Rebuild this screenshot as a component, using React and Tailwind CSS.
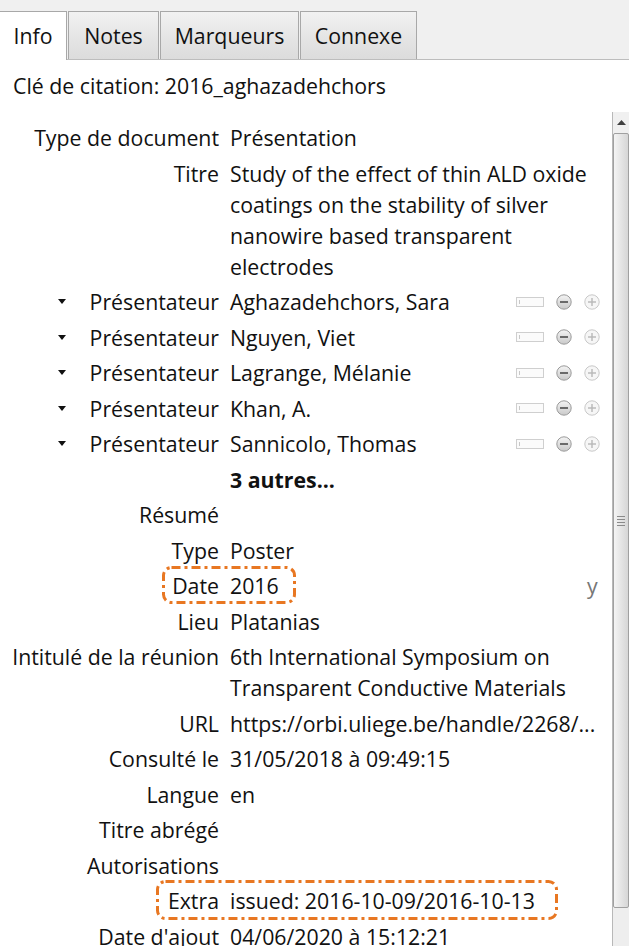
const font = { fontFamily: '"Open Sans", "Noto Sans", sans-serif' };

const tabs = ["Info", "Notes", "Marqueurs", "Connexe"];
const tabWidths = ["w-[67px]", "w-[91px]", "w-[139px]", "w-[117px]"];

const creators = [
  "Aghazadehchors, Sara",
  "Nguyen, Viet",
  "Lagrange, Mélanie",
  "Khan, A.",
  "Sannicolo, Thomas",
];

function DashBox({ className }) {
  return (
    <svg className={`pointer-events-none absolute ${className}`} preserveAspectRatio="none">
      <rect
        x="1.5"
        y="1.5"
        width="calc(100% - 3px)"
        height="calc(100% - 3px)"
        rx="8"
        fill="none"
        stroke="#e87722"
        strokeWidth="3"
        strokeDasharray="9 4 3 4"
      />
    </svg>
  );
}

function Row({ label, children, className = "", extra }) {
  return (
    <div className={`relative flex py-[2.25px] leading-[31px] ${className}`}>
      <div className="w-[219px] shrink-0 whitespace-nowrap text-right">{label}</div>
      <div className="ml-[11px] min-w-0 flex-1">{children}</div>
      {extra}
    </div>
  );
}

function CreatorControls() {
  return (
    <div className="flex items-center">
      <div className="relative h-[10px] w-[28px] border border-[#cfcfcf] bg-[#fbfbfb]">
        <div className="absolute left-[2px] top-[2px] h-[4px] w-px bg-[#c8c8c8]" />
      </div>
      <svg width="16" height="16" viewBox="0 0 16 16" className="ml-[12px]">
        <defs>
          <linearGradient id="mg" x1="0" y1="0" x2="0" y2="1">
            <stop offset="0" stopColor="#f4f4f4" />
            <stop offset="1" stopColor="#c9c9c9" />
          </linearGradient>
        </defs>
        <circle cx="8" cy="8" r="7.2" fill="url(#mg)" stroke="#9a9a9a" strokeWidth="1" />
        <rect x="4" y="7" width="8" height="2" fill="#6a6a6a" />
      </svg>
      <svg width="16" height="16" viewBox="0 0 16 16" className="ml-[12px]">
        <circle cx="8" cy="8" r="7.2" fill="#f6f6f6" stroke="#c8c8c8" strokeWidth="1" />
        <rect x="4" y="7.3" width="8" height="1.4" fill="#b8b8b8" />
        <rect x="7.3" y="4" width="1.4" height="8" fill="#b8b8b8" />
      </svg>
    </div>
  );
}

function Scrollbar() {
  return (
    <div className="flex w-[17px] shrink-0 flex-col border-l border-[#b8b8b8] bg-[#f0f0f0]">
      <div className="flex h-[21px] items-center justify-center">
        <svg width="9" height="5" viewBox="0 0 9 5">
          <path d="M0 5 L4.5 0 L9 5 Z" fill="#404040" />
        </svg>
      </div>
      <div className="flex h-[775px] items-center justify-center rounded-[2px] border border-[#a0a0a0] bg-gradient-to-r from-[#f4f4f4] to-[#d6d6d6]">
        <div className="flex flex-col gap-[2px]">
          <div className="h-px w-[8px] bg-[#8a8a8a]" />
          <div className="h-px w-[8px] bg-[#8a8a8a]" />
          <div className="h-px w-[8px] bg-[#8a8a8a]" />
          <div className="h-px w-[8px] bg-[#8a8a8a]" />
        </div>
      </div>
      <div className="flex-1 bg-[#eeeeee]" />
    </div>
  );
}

export default function App() {
  return (
    <div
      className="flex h-[946px] w-[629px] flex-col overflow-hidden bg-white text-[21.3px] text-[#111]"
      style={font}
    >
      <div className="flex h-[60px] shrink-0 items-end border-b border-[#bdbdbd] bg-[#f0f0f0]">
        {tabs.map((t, i) => (
          <div
            key={t}
            className={`flex h-[48px] items-center justify-center border-t border-r border-[#a8a8a8] ${tabWidths[i]} ${
              i === 0
                ? "-mb-px h-[49px] bg-white"
                : "ml-px border-l bg-gradient-to-b from-[#f2f2f2] via-[#e6e6e6] to-[#dcdcdc]"
            }`}
          >
            {t}
          </div>
        ))}
      </div>

      <div className="shrink-0 pl-[13px] pt-[10px] leading-[31px]">
        Clé de citation: 2016_aghazadehchors
      </div>

      <div className="mt-[11px] flex min-h-0 flex-1">
        <div className="min-w-0 flex-1 pt-[8px]">
          <Row label="Type de document">Présentation</Row>
          <Row label="Titre">
            <div className="whitespace-nowrap">Study of the effect of thin ALD oxide</div>
            <div>coatings on the stability of silver</div>
            <div>nanowire based transparent</div>
            <div>electrodes</div>
          </Row>
          {creators.map((c) => (
            <Row
              key={c}
              label={
                <div className="flex items-center justify-end">
                  <svg width="8" height="5" viewBox="0 0 8 5" className="mr-[24px]">
                    <path d="M0 0 L8 0 L4 5 Z" fill="#111" />
                  </svg>
                  <span>Présentateur</span>
                </div>
              }
            >
              <div className="flex items-center justify-between pr-[12px]">
                <span>{c}</span>
                <CreatorControls />
              </div>
            </Row>
          ))}
          <Row label="">
            <span className="font-bold">3 autres...</span>
          </Row>
          <Row label="Résumé" />
          <Row label="Type">Poster</Row>
          <Row
            label="Date"
            extra={
              <>
                <DashBox className="left-[162px] top-[-2px] h-[38px] w-[134px]" />
                <span className="absolute left-[587px] top-[2px] text-[#777]">y</span>
              </>
            }
          >
            2016
          </Row>
          <Row label="Lieu">Platanias</Row>
          <Row label="Intitulé de la réunion">
            <div className="whitespace-nowrap">6th International Symposium on</div>
            <div className="whitespace-nowrap">Transparent Conductive Materials</div>
          </Row>
          <Row label="URL">
            <div className="whitespace-nowrap">https://orbi.uliege.be/handle/2268/...</div>
          </Row>
          <Row label="Consulté le">31/05/2018 à 09:49:15</Row>
          <Row label="Langue">en</Row>
          <Row label="Titre abrégé" />
          <Row label="Autorisations" />
          <Row
            label="Extra"
            extra={<DashBox className="left-[156px] top-[-3px] h-[40px] w-[402px]" />}
          >
            issued: 2016-10-09/2016-10-13
          </Row>
          <Row label="Date d'ajout">04/06/2020 à 15:12:21</Row>
        </div>
        <Scrollbar />
      </div>
    </div>
  );
}
